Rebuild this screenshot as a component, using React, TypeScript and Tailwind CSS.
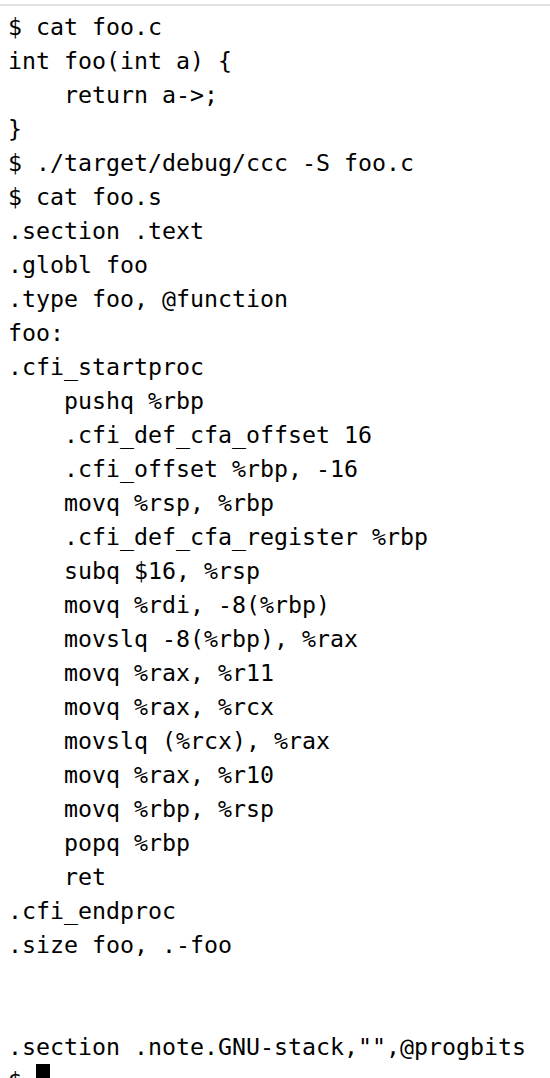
import React from 'react';

const lines: string[] = [
    '$ cat foo.c',
    'int foo(int a) {',
    '    return a->;',
    '}',
    '$ ./target/debug/ccc -S foo.c',
    '$ cat foo.s',
    '.section .text',
    '.globl foo',
    '.type foo, @function',
    'foo:',
    '.cfi_startproc',
    '    pushq %rbp',
    '    .cfi_def_cfa_offset 16',
    '    .cfi_offset %rbp, -16',
    '    movq %rsp, %rbp',
    '    .cfi_def_cfa_register %rbp',
    '    subq $16, %rsp',
    '    movq %rdi, -8(%rbp)',
    '    movslq -8(%rbp), %rax',
    '    movq %rax, %r11',
    '    movq %rax, %rcx',
    '    movslq (%rcx), %rax',
    '    movq %rax, %r10',
    '    movq %rbp, %rsp',
    '    popq %rbp',
    '    ret',
    '.cfi_endproc',
    '.size foo, .-foo',
    '',
    '',
    '.section .note.GNU-stack,"",@progbits',
];

export default function App() {
    return (
        <div className="w-[550px] h-[1078px] overflow-hidden bg-white">
            <div className="mt-[4px] h-[2px] bg-[#e2e2e2]"></div>
            <div className="pt-[4px] pl-[8px] text-black text-[23.25px] leading-[34px] font-['DejaVu_Sans_Mono',monospace]">
                {lines.map((line, i) => (
                    <div key={i} className="h-[34px] whitespace-pre">{line}</div>
                ))}
                {/* prompt with block cursor */}
                <div className="h-[34px] whitespace-pre flex">
                    <span>$ </span>
                    <span className="w-[14px] h-[30px] bg-black"></span>
                </div>
            </div>
        </div>
    );
}
